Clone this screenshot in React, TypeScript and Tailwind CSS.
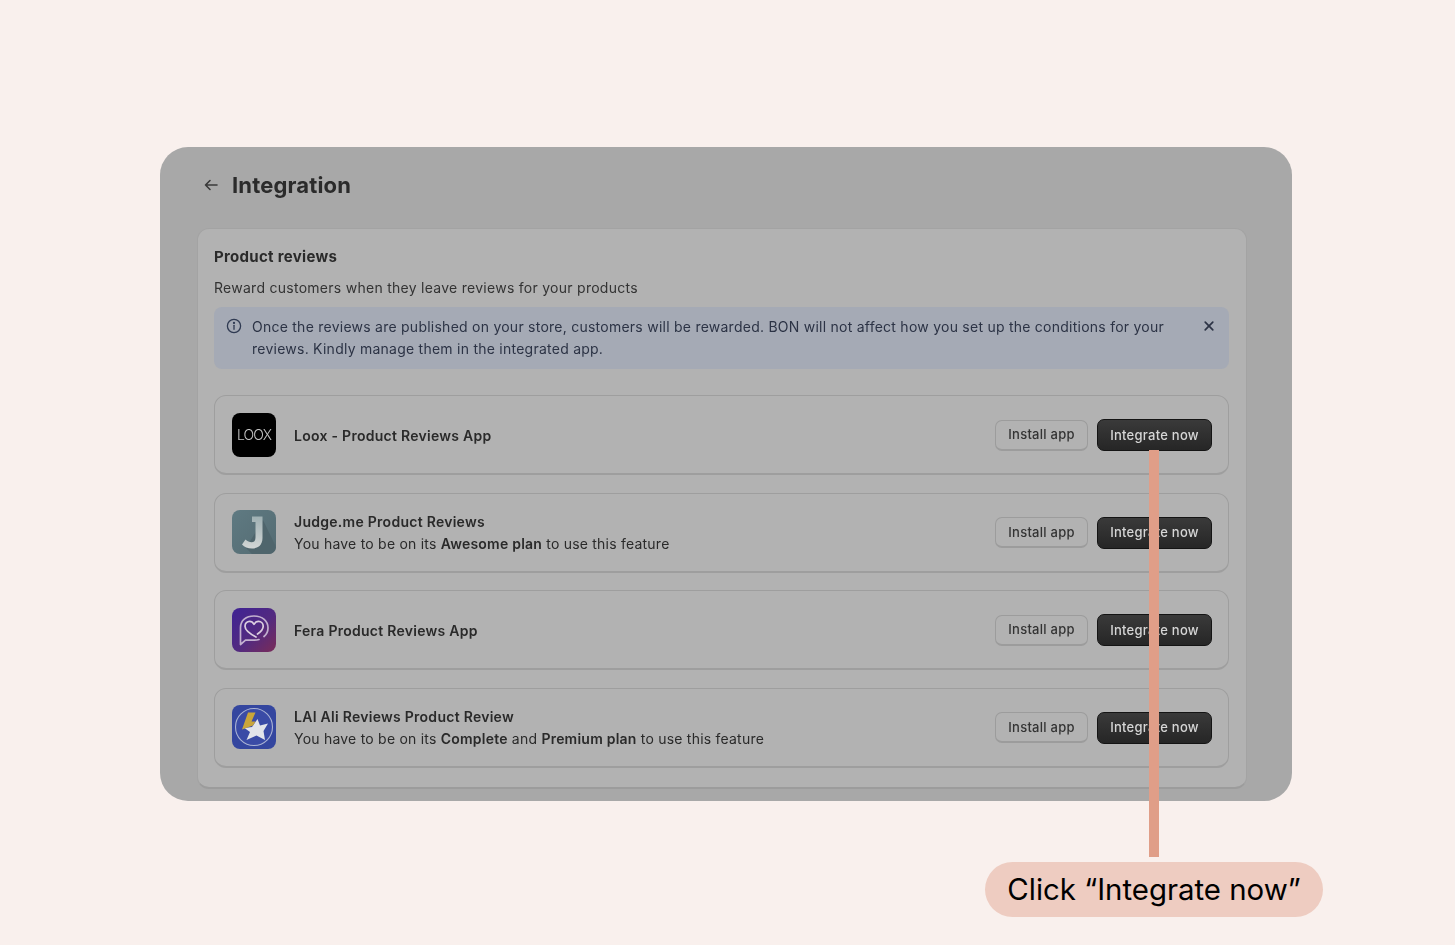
import React from "react";

function LooxLogo() {
  return (
    <div className="w-[44px] h-[44px] rounded-[8px] bg-black flex items-center justify-center shrink-0">
      <span className="text-[14px] tracking-[-0.9px] text-[#c4c4c4] font-light leading-none">LOOX</span>
    </div>
  );
}
function JudgeLogo() {
  return (
    <svg width="44" height="44" viewBox="0 0 44 44" className="shrink-0">
      <defs>
        <linearGradient id="jbg" x1="0" y1="0" x2="1" y2="1">
          <stop offset="0" stopColor="#5f7a82" />
          <stop offset="1" stopColor="#546b72" />
        </linearGradient>
        <linearGradient id="jfg" x1="0" y1="0" x2="0" y2="1">
          <stop offset="0" stopColor="#9fb0b3" />
          <stop offset="1" stopColor="#d2d6d5" />
        </linearGradient>
      </defs>
      <rect width="44" height="44" rx="8" fill="url(#jbg)" />
      <path d="M31 10 L44 37 a7 7 0 0 1 -7 7 H20 L14 38 Z" fill="#4f656c" />
      <path d="M20 6.5 H30.5 V28 C30.5 35 26 38.5 20 38.5 C15.5 38.5 12.5 37 10 34.5 L13.5 29.5 C15.5 31.3 17.5 32.3 19.5 32.3 C22 32.3 23.5 30.8 23.5 27.5 V12 H20 Z" fill="url(#jfg)" />
    </svg>
  );
}
function FeraLogo() {
  return (
    <svg width="44" height="44" viewBox="0 0 44 44" className="shrink-0">
      <defs>
        <linearGradient id="fera" x1="0" y1="0" x2="1" y2="1">
          <stop offset="0" stopColor="#3f2394" />
          <stop offset="0.55" stopColor="#522a80" />
          <stop offset="1" stopColor="#7a2c58" />
        </linearGradient>
      </defs>
      <rect width="44" height="44" rx="8" fill="url(#fera)" />
      <path d="M27 31.5 C25.5 32 24 32.2 22.5 32.2 H13.5 L8.5 36.5 V19.5 C8.5 12.5 14 8 22 8 C30.5 8 36 13 36 20 C36 23.5 34.5 26.5 32 28.5" fill="none" stroke="#c2b0cf" strokeWidth="1.7" strokeLinejoin="round" strokeLinecap="round" />
      <path d="M24 29 C17.5 25.5 13 22.5 13 18.2 C13 15.3 15.2 13.4 17.6 13.4 C19.5 13.4 21 14.5 22 16.3 C23 14.5 24.6 13.4 26.6 13.4 C29.2 13.4 31.2 15.4 31.2 18.2 C31.2 21.5 28.5 24 25.5 26" fill="none" stroke="#dccfe0" strokeWidth="1.7" strokeLinejoin="round" strokeLinecap="round" />
    </svg>
  );
}
function LaiLogo() {
  return (
    <svg width="44" height="44" viewBox="0 0 44 44" className="shrink-0">
      <rect width="44" height="44" rx="8" fill="#34469f" />
      <circle cx="22" cy="22" r="18.5" fill="#3a4ba6" stroke="#aab3d4" strokeWidth="1.1" />
      <path d="M25.5 14 L28 20.5 L36 18.5 L31.5 26 L33 35 L24.5 30.5 L14.5 35 L18 27 L12.5 23 L20 22 Z" fill="#e2e4ea" />
      <path d="M16 7.5 H23.5 L19.5 16.5 H23.5 L21 20.5 L10 24.5 Z" fill="#c9a53a" />
    </svg>
  );
}

type Row = { logo: React.ReactNode; title: string; sub?: React.ReactNode };

const rows: Row[] = [
  { logo: <LooxLogo />, title: "Loox - Product Reviews App" },
  {
    logo: <JudgeLogo />,
    title: "Judge.me Product Reviews",
    sub: (
      <>
        You have to be on its <b className="font-semibold">Awesome plan</b> to use this feature
      </>
    ),
  },
  { logo: <FeraLogo />, title: "Fera Product Reviews App" },
  {
    logo: <LaiLogo />,
    title: "LAI Ali Reviews Product Review",
    sub: (
      <>
        You have to be on its <b className="font-semibold">Complete</b> and{" "}
        <b className="font-semibold">Premium plan</b> to use this feature
      </>
    ),
  },
];

function AppRow({ row }: { row: Row }) {
  return (
    <div className="h-[80px] rounded-[12px] border border-[#9e9e9e] border-b-[2px] flex items-center pl-[17px] pr-[16px]">
      {row.logo}
      <div className="ml-[18px] pt-[2px] flex flex-col gap-[2px] text-[14px] leading-[20px] text-[#2a2a2a]">
        <div className="font-semibold tracking-[0.27px]">{row.title}</div>
        {row.sub && <div className="tracking-[0.22px]">{row.sub}</div>}
      </div>
      <div className="ml-auto pt-[1px] flex items-center gap-[9px]">
        <button className="w-[93px] h-[31px] rounded-[7px] border border-[#9c9c9c] border-b-[2px] pt-[1px] text-[13px] font-medium tracking-[0.25px] text-[#333333]">
          Install app
        </button>
        <button className="w-[115px] h-[32px] rounded-[7px] bg-gradient-to-b from-[#3a3a3a] to-[#262626] border border-[#141414] pt-[1px] text-[13px] font-medium tracking-[0.25px] text-[#d6d6d6]">
          Integrate now
        </button>
      </div>
    </div>
  );
}

export default function App() {
  return (
    <div className="relative w-[1455px] h-[945px] overflow-hidden bg-[#f9f0ed] pt-[147px] font-['Inter',sans-serif]">
      <div className="ml-[160px] w-[1132px] h-[654px] rounded-[28px] bg-[#a8a8a8] pt-[20px] pl-[37px] pr-[45px] blur-[0.5px]">
        <div className="flex items-center h-[36px] pl-[6px] gap-[13px] text-[#2b2b2b]">
          <svg width="16" height="16" viewBox="0 0 16 16" fill="none" stroke="#3a3a3a" strokeWidth="1.6" strokeLinecap="round" strokeLinejoin="round">
            <path d="M14 8 H2.5 M7 3.5 L2.5 8 L7 12.5" />
          </svg>
          <h1 className="text-[22px] font-bold leading-[36px] tracking-[0.15px]">Integration</h1>
        </div>
        <div className="mt-[25px] h-[561px] rounded-[12px] bg-[#b2b2b2] border border-[#a3a3a3] border-b-[2px] border-b-[#9c9c9c] pl-[16px] pr-[17px] pt-[17px]">
          <h2 className="text-[15px] font-bold leading-[22px] tracking-[0.3px] text-[#2a2a2a]">Product reviews</h2>
          <p className="mt-[9px] text-[14px] leading-[22px] tracking-[0.27px] text-[#333333]">
            Reward customers when they leave reviews for your products
          </p>
          <div className="mt-[8px] h-[62px] rounded-[8px] bg-[#a5aab5] flex pl-[12px] pr-[14px] pt-[9px] text-[#2c3345]">
            <svg width="16" height="16" viewBox="0 0 16 16" fill="none" stroke="#2f3a52" strokeWidth="1.3" strokeLinecap="round" className="shrink-0 mt-[2px]">
              <circle cx="8" cy="8" r="6.6" />
              <path d="M8 7.3 V11.3" />
              <circle cx="8" cy="4.9" r="0.5" fill="#2f3a52" />
            </svg>
            <p className="ml-[10px] w-[930px] text-[14px] leading-[22px] tracking-[0.245px]">
              Once the reviews are published on your store, customers will be rewarded. BON will not affect how you set up the conditions for your reviews. Kindly manage them in the integrated app.
            </p>
            <svg width="12" height="12" viewBox="0 0 12 12" fill="none" stroke="#2c3345" strokeWidth="1.7" strokeLinecap="round" className="ml-auto shrink-0 mt-[4px]">
              <path d="M2.2 2.2 L9.8 9.8 M9.8 2.2 L2.2 9.8" />
            </svg>
          </div>
          <div className="mt-[26px] flex flex-col gap-[17.5px]">
            {rows.map((r) => (
              <AppRow key={r.title} row={r} />
            ))}
          </div>
        </div>
      </div>

      <div className="absolute left-[1149px] top-[450px] w-[10px] h-[407px] bg-[#e09e88]" />

      <div className="mt-[61px] ml-[985px] w-[338px] h-[55px] rounded-full bg-[#eeccc1] flex items-center justify-center text-[29.4px] leading-none text-black">
        Click “Integrate now”
      </div>
    </div>
  );
}
